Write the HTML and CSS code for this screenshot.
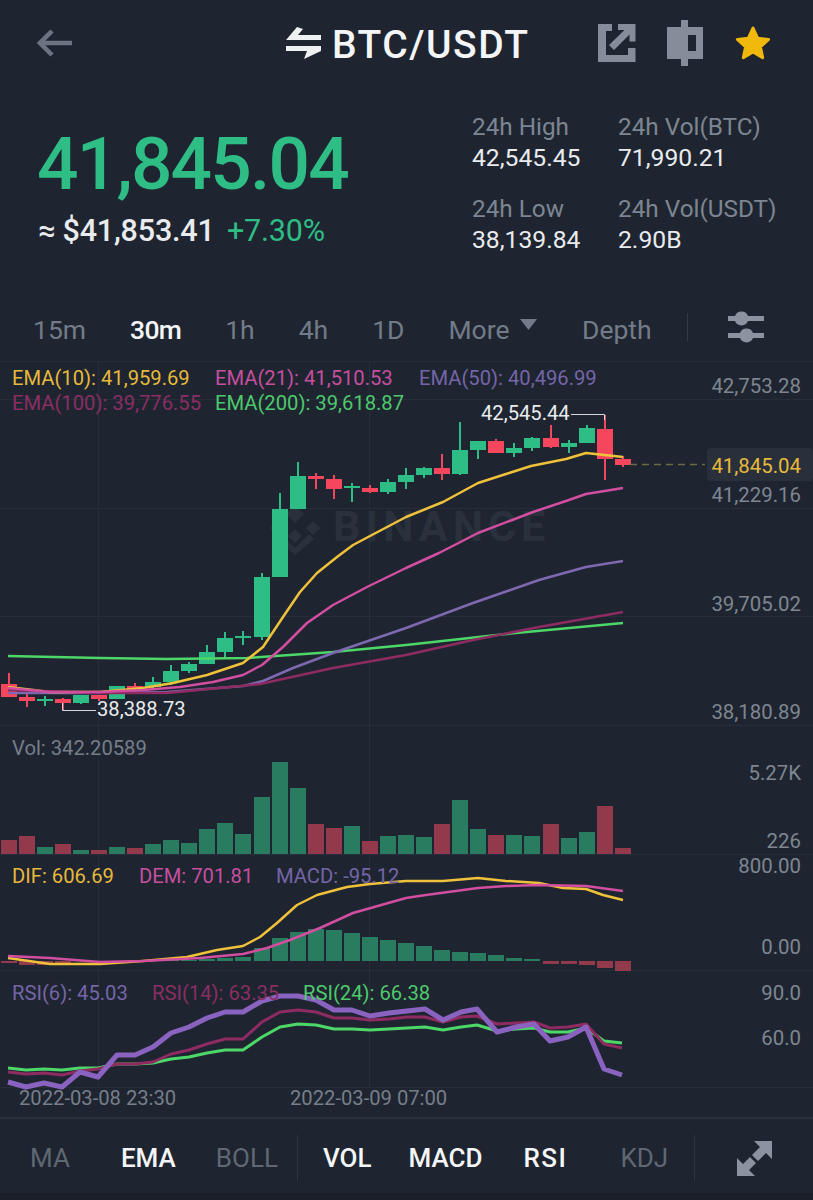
FILE: index.html
```html
<!DOCTYPE html>
<html lang="en">
<head>
  <meta charset="UTF-8" />
  <meta name="viewport" content="width=device-width, initial-scale=1.0"/>
  <title>BTC/USDT</title>
  <link rel="stylesheet" href="styles.css">
</head>
<body>
  <header class="topbar">
    <svg class="icon-back" width="35" height="28" viewBox="0 0 35 28"><path d="M15 2 3 14l12 12M3 14h32"/></svg>
    <svg class="icon-swap" width="35" height="32" viewBox="0 0 35 32"><path d="M11 0 0 13h35V8H12l5-6zM0 19h35v5L18 32l3-8H0z"/></svg>
    <h1 class="pair">BTC/USDT</h1>
    <svg class="icon-share" width="38" height="38" viewBox="0 0 38 38"><path d="M0 0h14v7H8v24h22v-7h7.500v14H0zM20 0h17.500v17.500h-6V10.500L16 26l-5-5L26.500 6H20z"/></svg>
    <svg class="icon-candle" width="36" height="46" viewBox="0 0 36 46"><path fill-rule="evenodd" d="M14 0h7v7h15v32H21v7h-7v-7H0V7h14zM21 15v16h8V15z"/></svg>
    <svg class="icon-star" width="36" height="36" viewBox="0 0 36 36"><path d="M18 3l4.600 10.200 11 1.200-8.200 7.400 2.300 10.900L18 27l-9.700 5.700 2.300-10.900-8.200-7.400 11-1.200z"/></svg>
  </header>

  <section class="summary">
    <div class="price-box">
      <div class="price">41,845.04</div>
      <div class="price-sub">≈ $41,853.41 <span class="change">+7.30%</span></div>
    </div>
    <div class="stats">
      <div class="stat"><span>24h High</span><b>42,545.45</b></div>
      <div class="stat"><span>24h Vol(BTC)</span><b>71,990.21</b></div>
      <div class="stat"><span>24h Low</span><b>38,139.84</b></div>
      <div class="stat"><span>24h Vol(USDT)</span><b>2.90B</b></div>
    </div>
  </section>

  <nav class="tabs">
    <span>15m</span>
    <span class="active">30m</span>
    <span>1h</span>
    <span>4h</span>
    <span>1D</span>
    <span class="more">More <svg width="19" height="13" viewBox="0 0 19 13"><path d="M1 1h17L9.500 12z"/></svg></span>
    <span>Depth</span>
    <i class="tab-sep"></i>
    <svg class="icon-sliders" width="36" height="32" viewBox="0 0 36 32"><path d="M0 5h7a7 7 0 0 1 13 0h16v5H20a7 7 0 0 1-13 0H0zM0 22h12a7 7 0 0 1 13 0h11v5H25a7 7 0 0 1-13 0H0z"/></svg>
  </nav>

  <svg class="chart" width="813" height="756" viewBox="0 361 813 756">
    <!-- grid -->
    <path class="grid" d="M0 361.500H813M0 399.500H813M0 508.500H813M0 616.500H813M0 725.500H813M0 854.500H813M0 970.500H813M0 1087.500H813M98.500 361V1087M369.500 361V1087"/>

    <!-- watermark -->
    <path class="mark" d="M295 505l9 9-9 9-9-9zM277 521l7 7-7 7-7-7zM313 521l7 7-7 7-7-7zM295 529l7 7-7 7-7-7zM295 548l14-14 5 5-19 16-19-16 5-5z"/>
    <text class="mark-text" x="333" y="541">BINANCE</text>

    <!-- candles -->
    <path class="wick-up" d="M45 696V706M81 695V704M117 686V699M153 677V688M171 665V685M189 662V673M207 645V664M225 632V657M243 631V645M262 573V640M280 493V577M298 462V509M352 483V502M388 479V494M406 468V489M424 467V478M460 422V475M478 441V459M514 443V457M532 437V451M569 440V453M587 425V443"/>
    <path class="body-up" d="M45 699V701M81 695V703M117 686V699M153 682V687M171 671V682M189 664V671M207 652V664M225 638V652M243 636V638M262 577V637M280 509V577M298 476V509M352 486V488M388 482V492M406 475V482M424 468V475M460 450V474M478 441V450M514 448V453M532 438V448M569 443V447M587 428V443"/>
    <path class="wick-down" d="M9 673V697M27 693V707M63 698V710M99 695V701M135 683V692M316 473V489M334 475V499M370 485V493M442 454V480M496 439V453M551 425V448M605 415V480M623 456V467"/>
    <path class="body-down" d="M9 684V697M27 697V701M63 699V703M99 695V699M135 686V689M316 476V479M334 479V489M370 488V492M442 468V474M496 441V453M551 438V447M605 429V459M623 459V465"/>

    <!-- ema lines -->
    <polyline class="line green" points="8,656 100,658 167,659 247,658 333,652 406,645 506,634 623,623"/>
    <polyline class="line purple" points="8,693 100,693 167,692 243,686 263,681 293,668 333,653 406,628 473,603 539,580 586,567 623,561"/>
    <polyline class="line yellow" points="8,687 50,692 100,692 143,688 173,683 207,675 243,663 263,647 283,617 300,592 317,573 337,557 353,545 406,517 443,502 478,483 506,474 531,466 566,459 586,453 623,457"/>
    <polyline class="line crimson" points="8,690 100,693 167,693 260,684 333,668 406,655 473,640 539,627 623,612"/>
    <polyline class="line pink" points="8,688 50,692 100,692 143,690 180,687 213,682 243,675 262,665 283,647 307,623 333,605 367,587 406,568 439,553 478,533 533,512 566,501 586,494 623,488"/>

    <!-- high / low markers -->
    <path class="leader" d="M571 414.500H604.500V420M62.500 703V710.500H96"/>
    <text class="marker" x="481" y="420">42,545.44</text>
    <text class="marker" x="97" y="716">38,388.73</text>

    <!-- ema legend -->
    <text class="label t-yellow" x="12" y="385">EMA(10): 41,959.69</text>
    <text class="label t-pink" x="215" y="385">EMA(21): 41,510.53</text>
    <text class="label t-purple" x="419" y="385">EMA(50): 40,496.99</text>
    <text class="label t-crimson" x="12" y="410">EMA(100): 39,776.55</text>
    <text class="label t-green" x="215" y="410">EMA(200): 39,618.87</text>

    <!-- price axis -->
    <text class="axis" x="801" y="393">42,753.28</text>
    <path class="last-line" d="M630 464.500H705"/>
    <rect class="last-tag" x="707" y="448" width="106" height="33" rx="4"/>
    <text class="axis t-yellow" x="801" y="473">41,845.04</text>
    <text class="axis" x="801" y="502">41,229.16</text>
    <text class="axis" x="801" y="611">39,705.02</text>
    <text class="axis" x="801" y="719">38,180.89</text>

    <!-- volume -->
    <text class="label t-grey" x="12" y="755">Vol: 342.20589</text>
    <text class="axis" x="801" y="780">5.27K</text>
    <text class="axis" x="801" y="848">226</text>
    <path class="bar-up" d="M45 847V854M81 850V854M117 847V854M153 844V854M171 840V854M189 843V854M207 829V854M225 823V854M243 834V854M262 797V854M280 762V854M298 788V854M352 826V854M388 836V854M406 835V854M424 837V854M460 800V854M478 829V854M514 835V854M532 836V854M569 838V854M587 832V854"/>
    <path class="bar-down" d="M9 840V854M27 836V854M63 844V854M99 850V854M135 848V854M316 824V854M334 828V854M370 841V854M442 824V854M496 835V854M551 824V854M605 806V854M623 848V854"/>

    <!-- macd -->
    <path class="bar-up" d="M153 960V961M171 960V961M189 960V961M207 959V961M225 958V961M243 957V961M262 948V961M280 938V961M298 932V961M316 929V961M334 930V961M352 933V961M370 937V961M388 940V961M406 943V961M424 946V961M442 950V961M460 952V961M478 953V961M496 955V961M514 958V961M532 959V961"/>
    <path class="bar-down" d="M9 961V963M27 961V965M45 961V965M63 961V965M551 961V964M569 961V964M587 961V965M605 961V968M623 961V971"/>
    <polyline class="line yellow" points="8,958 50,964 100,964 143,961 187,957 217,950 243,946 260,937 277,923 297,905 317,895 347,887 370,884 406,881 443,881 478,878 506,881 539,883 563,888 586,889 603,895 623,900"/>
    <polyline class="line pink" points="8,956 50,958 100,962 143,961 200,958 243,954 267,948 290,940 320,928 353,913 406,898 426,895 478,888 506,886 539,885 586,886 623,891"/>
    <text class="label t-yellow" x="12" y="883">DIF: 606.69</text>
    <text class="label t-pink" x="139" y="883">DEM: 701.81</text>
    <text class="label t-purple" x="276" y="883">MACD: -95.12</text>
    <text class="axis" x="801" y="873">800.00</text>
    <text class="axis" x="801" y="954">0.00</text>

    <!-- rsi -->
    <polyline class="line-rsi green" points="8,1068 26,1070 44,1069 62,1070 80,1068 98,1068 117,1064 135,1064 153,1063 171,1059 189,1057 207,1053 225,1050 243,1050 262,1037 280,1027 298,1024 316,1025 334,1029 352,1029 370,1030 389,1029 407,1028 425,1027 443,1030 461,1027 477,1025 497,1031 516,1029 534,1028 550,1032 568,1032 586,1028 604,1041 622,1043"/>
    <polyline class="line-rsi crimson" points="8,1072 26,1074 44,1073 62,1075 80,1071 98,1069 117,1064 135,1064 153,1062 171,1054 189,1050 207,1044 225,1039 243,1039 262,1022 280,1012 298,1010 316,1012 334,1018 352,1018 370,1020 389,1019 407,1017 425,1017 443,1022 461,1017 477,1016 497,1024 516,1023 534,1022 550,1028 568,1027 586,1024 604,1044 622,1048"/>
    <polyline class="line-rsi6" points="8,1082 26,1087 44,1083 62,1087 80,1072 98,1077 117,1055 135,1055 153,1047 171,1033 189,1027 207,1018 225,1012 243,1012 262,1001 280,996 298,996 316,1000 334,1010 352,1010 370,1016 389,1013 407,1011 425,1009 443,1020 461,1012 477,1009 497,1032 516,1027 534,1024 550,1041 568,1037 586,1027 604,1069 622,1075"/>
    <text class="label t-purple" x="12" y="1000">RSI(6): 45.03</text>
    <text class="label t-crimson" x="152" y="1000">RSI(14): 63.35</text>
    <text class="label t-green" x="303" y="1000">RSI(24): 66.38</text>
    <text class="axis" x="801" y="1000">90.0</text>
    <text class="axis" x="801" y="1045">60.0</text>
    <text class="label t-grey" x="19" y="1105">2022-03-08 23:30</text>
    <text class="label t-grey" x="290" y="1105">2022-03-09 07:00</text>
  </svg>

  <footer class="indicators">
    <span class="ind-ma">MA</span>
    <span class="ind-ema on">EMA</span>
    <span class="ind-boll">BOLL</span>
    <i class="ind-sep"></i>
    <span class="ind-vol on">VOL</span>
    <span class="ind-macd on">MACD</span>
    <span class="ind-rsi on">RSI</span>
    <span class="ind-kdj">KDJ</span>
    <i class="ind-sep"></i>
    <svg class="icon-expand" width="35" height="35" viewBox="0 0 35 35"><path d="M17 0h18v18l-6-6-8 8-6-6 8-8zM0 17l6 6 7-7 6 6-7 7 6 6H0z"/></svg>
  </footer>
</body>
</html>
```

FILE: styles.css
```css
body {
  margin: 0;
  background-color: #1e2530;
  color: #e9ebee;
  font-family: Roboto, "Noto Sans", sans-serif;
  overflow: hidden;
}

/* top bar */
.topbar {
  display: flex;
  align-items: center;
  height: 85px;
  padding-left: 37px;
}
.icon-back {
  fill: none;
  stroke: #6b7480;
  stroke-width: 4.5;
}
.icon-swap {
  margin-left: 214px;
  fill: #eef0f2;
}
.pair {
  margin: 5px 0 0 11px;
  width: 266px;
  font-size: 39px;
  font-weight: 500;
  letter-spacing: 1.5px;
  color: #f4f5f6;
}
.icon-share, .icon-candle {
  fill: #858d9b;
}
.icon-candle {
  margin-left: 31px;
}
.icon-star {
  margin-left: 32px;
  fill: #f0b90b;
  stroke: #f0b90b;
  stroke-width: 3;
  stroke-linejoin: round;
}

/* price and 24h numbers */
.summary {
  display: flex;
  height: 225px;
  padding-left: 38px;
}
.price-box {
  width: 434px;
  padding-top: 39px;
}
.price {
  margin-left: -1px;
  font-size: 73px;
  font-weight: 500;
  line-height: 80px;
  letter-spacing: -1.8px;
  color: #2ebd85;
}
.price-sub {
  font-size: 30.500px;
  font-weight: 500;
  line-height: 54px;
  letter-spacing: -0.2px;
}
.change {
  margin-left: 5px;
  font-weight: 400;
  color: #2ebd85;
}
.stats {
  display: grid;
  grid-template-columns: 146px 170px;
  grid-auto-rows: 62px;
  row-gap: 20px;
  padding-top: 26px;
}
.stat span, .stat b {
  display: block;
  line-height: 31px;
  font-weight: 400;
}
.stat span {
  font-size: 24.300px;
  color: #7d8592;
}
.stat b {
  font-size: 24.700px;
}

/* interval tabs */
.tabs {
  display: flex;
  align-items: center;
  box-sizing: border-box;
  height: 51px;
  padding: 0 0 12px 33px;
  gap: 44px;
  font-size: 26.500px;
  color: #737b88;
}
.tabs .active {
  color: #f4f5f6;
  font-weight: 500;
  letter-spacing: -0.7px;
}
.more svg {
  margin-left: 3px;
  vertical-align: 8px;
  fill: #737b88;
}
.tab-sep {
  width: 1px;
  height: 28px;
  margin: 0 0 5px -9px;
  background-color: #343b47;
}
.icon-sliders {
  margin: 0 0 5px -4px;
  fill: #8b93a0;
}

/* chart */
.chart {
  display: block;
}
.grid {
  fill: none;
  stroke: #272e39;
  stroke-width: 1;
}
.mark {
  fill: #2a313c;
}
.mark-text {
  font-size: 43px;
  font-weight: 700;
  letter-spacing: 5px;
  fill: #2a313c;
}
.wick-up, .wick-down {
  fill: none;
  stroke-width: 2;
}
.body-up, .body-down, .bar-up, .bar-down {
  fill: none;
  stroke-width: 16;
}
.wick-up, .body-up {
  stroke: #2ebd85;
}
.wick-down, .body-down {
  stroke: #f6465d;
}
.bar-up {
  stroke: #2a7c60;
}
.bar-down {
  stroke: #92394c;
}
.line, .line-rsi, .line-rsi6 {
  fill: none;
  stroke-linejoin: round;
}
.line {
  stroke-width: 2.5;
}
.line-rsi {
  stroke-width: 3;
}
.line-rsi6 {
  stroke: #8a63c0;
  stroke-width: 5;
}
.yellow { stroke: #f0c13a; }
.pink { stroke: #d24ea0; }
.purple { stroke: #7e68b0; }
.crimson { stroke: #8e2b62; }
.green { stroke: #4dd768; }
.leader {
  fill: none;
  stroke: #d5d8dc;
  stroke-width: 1;
}
.marker {
  font-size: 20.200px;
  fill: #e9ebee;
}
.label {
  font-size: 20.200px;
}
.axis {
  font-size: 20.400px;
  text-anchor: end;
  fill: #7f8691;
}
.last-tag {
  fill: #2a303b;
}
.last-line {
  fill: none;
  stroke: #6e6a3f;
  stroke-width: 1.500;
  stroke-dasharray: 7 5;
}
text.t-yellow { fill: #e6b93c; }
text.t-pink { fill: #c64f9f; }
text.t-purple { fill: #7565a8; }
text.t-crimson { fill: #8a2e63; }
text.t-green { fill: #4dc96c; }
text.t-grey { fill: #767e8a; }

/* indicator bar */
.indicators {
  display: flex;
  align-items: center;
  box-sizing: border-box;
  height: 83px;
  padding-top: 4px;
  border-top: 2px solid #2a303b;
  border-bottom: 7px solid #191e27;
  font-size: 26px;
  color: #5f6773;
}
.indicators .on {
  color: #f4f5f6;
  font-weight: 500;
}
.ind-ma { margin-left: 30px; }
.ind-ema { margin-left: 51px; }
.ind-boll { margin-left: 40px; }
.ind-vol { margin-left: 25px; }
.ind-macd { margin-left: 37px; }
.ind-rsi { margin-left: 41px; letter-spacing: 1.500px; }
.ind-kdj { margin-left: 53px; }
.ind-sep {
  width: 1px;
  height: 46px;
  margin-left: 19px;
  background-color: #2e3540;
}
.ind-kdj + .ind-sep {
  margin-left: 26px;
}
.icon-expand {
  margin-left: 42px;
  fill: #8b93a0;
}
```
